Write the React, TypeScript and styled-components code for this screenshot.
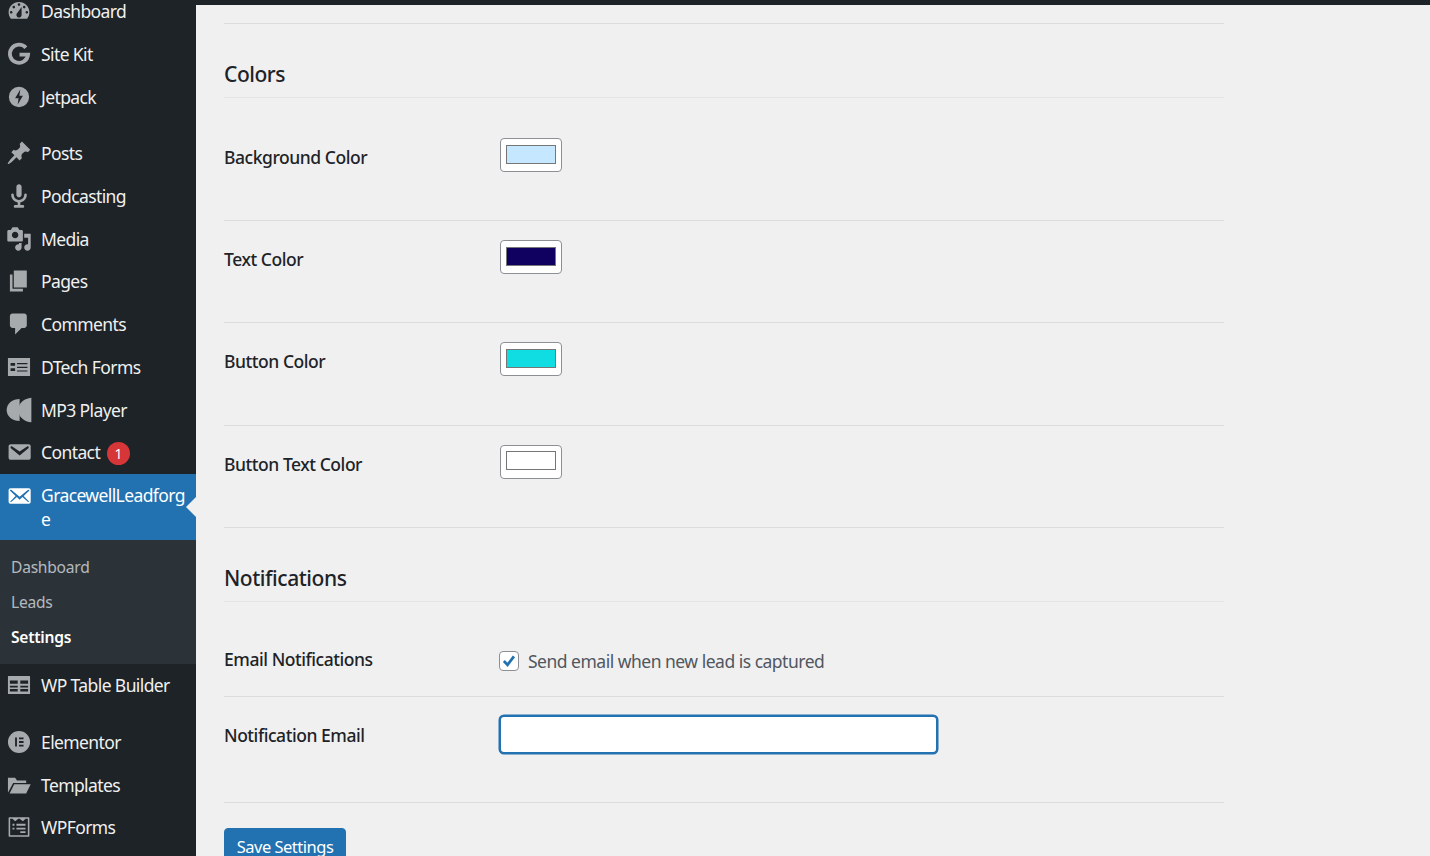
import { ReactNode } from "react";
import styled, { createGlobalStyle } from "styled-components";

const FONT = `"Noto Sans", "Open Sans", "Liberation Sans", sans-serif`;

const Dash = ({ d }: { d: string }) => (
  <svg viewBox="0 0 20 20" width="26" height="26" fill="currentColor" fillRule="evenodd">
    <path d={d} />
  </svg>
);

const icons: Record<string, ReactNode> = {
  dashboard: (
    <Dash d="M3.76 16h12.48c1.1-1.37 1.76-3.11 1.76-5 0-4.42-3.58-8-8-8s-8 3.58-8 8c0 1.89.66 3.63 1.76 5zM10 4c.55 0 1 .45 1 1s-.45 1-1 1-1-.45-1-1 .45-1 1-1zM6 6c.55 0 1 .45 1 1s-.45 1-1 1-1-.45-1-1 .45-1 1-1zm8 0c.55 0 1 .45 1 1s-.45 1-1 1-1-.45-1-1 .45-1 1-1zm-5.37 5.55L12 7v6c0 1.1-.9 2-2 2s-2-.9-2-2c0-.57.24-1.08.63-1.45zM4 10c.55 0 1 .45 1 1s-.45 1-1 1-1-.45-1-1 .45-1 1-1zm12 0c.55 0 1 .45 1 1s-.45 1-1 1-1-.45-1-1 .45-1 1-1z" />
  ),
  google: (
    <svg viewBox="0 0 20 20" width="26" height="26" fill="none" stroke="currentColor" strokeWidth="2.9">
      <path d="M15.3 5.2A7 7 0 1 0 17 10.4H10.4" />
    </svg>
  ),
  jetpack: (
    <svg viewBox="0 0 20 20" width="26" height="26" fill="currentColor" fillRule="evenodd">
      <path d="M10 2.200a7.800 7.800 0 1 1 0 15.600a7.800 7.800 0 0 1 0-15.600zM11 4.300L7 11h2.700l-.7 4.700 4-6.700h-2.700z" />
    </svg>
  ),
  pin: (
    <Dash d="M10.44 3.02l1.82-1.82 6.36 6.35-1.83 1.82c-1.05-.68-2.48-.57-3.41.36l-.75.75c-.92.93-1.04 2.35-.35 3.41l-1.83 1.82-2.41-2.41-2.8 2.79c-.42.42-3.38 2.71-3.8 2.29s1.86-3.39 2.28-3.81l2.79-2.79L4.1 9.36l1.83-1.82c1.05.69 2.48.57 3.4-.36l.75-.75c.93-.92 1.05-2.35.36-3.41z" />
  ),
  mic: (
    <Dash d="M12 9V3c0-1.1-.89-2-2-2-1.12 0-2 .94-2 2v6c0 1.1.9 2 2 2 1.1 0 2-.9 2-2zm4 0c0 2.97-2.16 5.43-5 5.91V17h2c.56 0 1 .45 1 1s-.44 1-1 1H7c-.55 0-1-.45-1-1s.45-1 1-1h2v-2.09C6.17 14.43 4 11.97 4 9c0-.55.45-1 1-1 .56 0 1 .45 1 1 0 2.21 1.8 4 4 4 2.21 0 4-1.79 4-4 0-.55.45-1 1-1 .56 0 1 .45 1 1z" />
  ),
  media: (
    <Dash d="M13 11V4c0-.55-.45-1-1-1h-1.67L9 1H5L3.67 3H2c-.55 0-1 .45-1 1v7c0 .55.45 1 1 1h10c.55 0 1-.45 1-1zM7 4.5c1.38 0 2.5 1.12 2.5 2.5S8.38 9.5 7 9.5 4.5 8.38 4.5 7 5.62 4.5 7 4.5zM14 6h5v10.5c0 1.38-1.12 2.5-2.5 2.5S14 17.88 14 16.5s1.12-2.5 2.5-2.5c.17 0 .34.02.5.05V9h-3V6zm-4 8.05V13h2v3.5c0 1.38-1.12 2.5-2.5 2.5S7 17.88 7 16.5 8.12 14 9.5 14c.17 0 .34.02.5.05z" />
  ),
  pages: <Dash d="M6 15V2h10v13H6zm-1 1h8v2H3V5h2v11z" />,
  comments: (
    <Dash d="M5 2h9c1.1 0 2 .9 2 2v7c0 1.1-.9 2-2 2h-2l-5 5v-5H5c-1.1 0-2-.9-2-2V4c0-1.1.9-2 2-2z" />
  ),
  forms: (
    <Dash d="M1.500 3h17v14h-17zM3.500 7v2h3.500V7zM3.500 11v2h3.500v-2zM8.500 7v.9h8V7zM8.500 9.800v.9h8v-.9zM8.500 12.600v.9h8v-.9z" />
  ),
  player: (
    <svg viewBox="0 0 20 20" width="26" height="26" fill="currentColor">
      <path d="M10.500 1.500v17C5 18.500 0.500 15 0.500 10S5 1.500 10.500 1.500z" />
      <path d="M19.500 0.500v19C14 19 9.500 15.500 9.500 10S14 1 19.500 0.500z" />
    </svg>
  ),
  email: (
    <Dash d="M3.870 4h13.250C18.370 4 19 4.590 19 5.790v8.420c0 1.190-.63 1.790-1.880 1.790H3.870c-1.250 0-1.880-.6-1.880-1.790V5.790c0-1.200.63-1.790 1.880-1.790zm6.620 8.600l6.740-5.530c.24-.2.430-.66.130-1.070-.29-.41-.82-.42-1.170-.17l-5.700 3.860L4.800 5.830c-.35-.25-.88-.24-1.170.17-.3.410-.11.870.13 1.070z" />
  ),
  emailAlt: (
    <Dash d="M19 14.500v-9c0-.83-.67-1.500-1.500-1.500H3.490c-.83 0-1.500.67-1.500 1.500v9c0 .83.67 1.500 1.500 1.500H17.500c.83 0 1.500-.67 1.500-1.500zm-1.310-9.110c.33.33.15.67-.03.84L13.600 9.950l3.900 4.060c.12.14.2.36.06.51-.13.16-.43.15-.56.05l-4.370-3.730-2.140 1.950-2.130-1.950-4.370 3.730c-.13.1-.43.11-.56-.05-.14-.15-.06-.37.06-.51l3.900-4.060-4.060-3.720c-.18-.17-.36-.51-.03-.84s.67-.17.95.07l6.240 5.040 6.250-5.040c.28-.24.62-.4.950-.07z" />
  ),
  table: (
    <Dash d="M2 3h16c.3 0 .5.2.5.5v13c0 .3-.2.5-.5.5H2c-.3 0-.5-.2-.5-.5v-13c0-.3.2-.5.5-.5zm1 3.500V9h6V6.500H3zm8 0V9h6V6.500h-6zM3 10.500V15h6v-4.500H3zm8 0V15h6v-4.500h-6zM3 12h6v1H3zm8 0h6v1h-6z" />
  ),
  elementor: (
    <Dash d="M10 1.500a8.500 8.500 0 1 1 0 17a8.500 8.500 0 0 1 0-17zM7 6.500v7h1.400v-7zM10 6.500v1.400h3.500V6.500zM10 9.300v1.400h3.500V9.300zM10 12.100v1.400h3.500v-1.400z" />
  ),
  folder: (
    <Dash d="M1.500 16V4.500h5.500l1.500 2h7v2H5.500zM2.800 16.500l3.500-7H19l-3.500 7z" />
  ),
  wpforms: (
    <Dash d="M2.500 2.500h15c.3 0 .5.2.5.5v14c0 .3-.2.5-.5.5h-15c-.3 0-.5-.2-.5-.5V3c0-.3.2-.5.5-.5zm.700 1.200v12.600h13.600V3.700h-1.800L13 5.500 10.500 3.700h-1L7 5.500 5 3.700zM5 7.500h1.500V9H5zM8 7.500h7V9H8zM5 10.500h1.500V12H5zM8 10.500h7V12H8zM11 13.300h4v1.300h-4z" />
  ),
};

type NavEntry = { icon: string; label: string; gap?: boolean; badge?: string };

const topNav: NavEntry[] = [
  { icon: "dashboard", label: "Dashboard" },
  { icon: "google", label: "Site Kit" },
  { icon: "jetpack", label: "Jetpack" },
  { icon: "pin", label: "Posts", gap: true },
  { icon: "mic", label: "Podcasting" },
  { icon: "media", label: "Media" },
  { icon: "pages", label: "Pages" },
  { icon: "comments", label: "Comments" },
  { icon: "forms", label: "DTech Forms" },
  { icon: "player", label: "MP3 Player" },
  { icon: "email", label: "Contact", badge: "1" },
];

const bottomNav: NavEntry[] = [
  { icon: "table", label: "WP Table Builder" },
  { icon: "elementor", label: "Elementor", gap: true },
  { icon: "folder", label: "Templates" },
  { icon: "wpforms", label: "WPForms" },
];

const NavRow = ({ icon, label, gap, badge }: NavEntry) => (
  <NavItem $gap={gap}>
    <NavIcon>{icons[icon]}</NavIcon>
    <NavText>{label}</NavText>
    {badge && <Badge>{badge}</Badge>}
  </NavItem>
);

const colorFields = [
  { label: "Background Color", color: "#c5e7ff" },
  { label: "Text Color", color: "#100060" },
  { label: "Button Color", color: "#0fdde2" },
  { label: "Button Text Color", color: "#ffffff" },
];

export default function App() {
  return (
    <>
      <GlobalStyle />
      <Page>
        <AdminBar />
        <Body>
          <Sidebar>
            <Menu>
              {topNav.map((item) => (
                <NavRow key={item.label} {...item} />
              ))}
              <ActiveItem>
                <NavIcon>{icons.emailAlt}</NavIcon>
                <ActiveText>GracewellLeadforge</ActiveText>
                <Notch />
              </ActiveItem>
              <SubMenu>
                <SubItem>Dashboard</SubItem>
                <SubItem>Leads</SubItem>
                <SubItem $current>Settings</SubItem>
              </SubMenu>
              {bottomNav.map((item) => (
                <NavRow key={item.label} {...item} />
              ))}
            </Menu>
          </Sidebar>
          <Main>
            <Content>
              <Rule />
              <SectionTitle>Colors</SectionTitle>
              <Fields>
                {colorFields.map((field) => (
                  <ColorRow key={field.label}>
                    <FieldLabel>{field.label}</FieldLabel>
                    <Swatch type="button">
                      <SwatchFill $color={field.color} />
                    </Swatch>
                  </ColorRow>
                ))}
              </Fields>
              <SectionTitle>Notifications</SectionTitle>
              <Fields>
                <CheckRow>
                  <CheckRowLabel>Email Notifications</CheckRowLabel>
                  <CheckLabel>
                    <CheckBox>
                      <svg viewBox="0 0 20 20" width="20" height="20">
                        <path
                          d="M4.300 10 L8.400 14.300 L15.500 4.800"
                          fill="none"
                          stroke="#2271b1"
                          strokeWidth="3"
                        />
                      </svg>
                    </CheckBox>
                    Send email when new lead is captured
                  </CheckLabel>
                </CheckRow>
                <InputRow>
                  <InputLabel>Notification Email</InputLabel>
                  <EmailInput type="email" />
                </InputRow>
              </Fields>
              <SaveButton type="button">Save Settings</SaveButton>
            </Content>
          </Main>
        </Body>
      </Page>
    </>
  );
}

const GlobalStyle = createGlobalStyle`
  html, body {
    margin: 0;
    padding: 0;
    background: #f0f0f1;
    font-family: ${FONT};
  }
`;

const Page = styled.div`
  height: 856px;
  overflow: hidden;
  display: flex;
  flex-direction: column;
`;

const AdminBar = styled.div`
  height: 5px;
  flex: none;
  background: #1d2327;
`;

const Body = styled.div`
  display: flex;
  flex: 1;
  min-height: 0;
`;

const Sidebar = styled.nav`
  width: 196px;
  flex: none;
  background: #1d2327;
`;

const Menu = styled.div`
  margin-top: -15.2px;
`;

const NavItem = styled.div<{ $gap?: boolean }>`
  height: 42.75px;
  margin-top: ${({ $gap }) => ($gap ? "13.8px" : "0")};
  display: flex;
  align-items: center;
  color: #a7aaad;
`;

const NavIcon = styled.span`
  width: 26px;
  height: 26px;
  margin-left: 6px;
  flex: none;
  display: block;
`;

const NavText = styled.span`
  margin-left: 9px;
  color: #f0f0f1;
  font-size: 17.5px;
  letter-spacing: -0.6px;
  line-height: 24px;
`;

const Badge = styled.span`
  width: 23px;
  height: 23px;
  margin-left: 7px;
  margin-top: 2px;
  border-radius: 50%;
  background: #d63638;
  color: #fff;
  font-size: 14px;
  line-height: 23px;
  text-align: center;
`;

const ActiveItem = styled.div`
  position: relative;
  height: 66px;
  padding-top: 9px;
  box-sizing: border-box;
  display: flex;
  align-items: flex-start;
  background: #2271b1;
  color: #fff;
`;

const ActiveText = styled(NavText)`
  width: 147px;
  color: #fff;
  overflow-wrap: anywhere;
`;

const Notch = styled.span`
  position: absolute;
  right: 0;
  top: 23px;
  border: 10px solid transparent;
  border-left-width: 0;
  border-right-color: #f0f0f1;
`;

const SubMenu = styled.div`
  padding: 10.5px 0 8.5px;
  background: #2c3338;
`;

const SubItem = styled.div<{ $current?: boolean }>`
  height: 35px;
  padding-left: 11px;
  font-size: 15.600px;
  letter-spacing: -0.25px;
  line-height: 35px;
  font-weight: ${({ $current }) => ($current ? 600 : 400)};
  color: ${({ $current }) => ($current ? "#fff" : "rgba(240, 246, 252, 0.7)")};
`;

const Main = styled.main`
  flex: 1;
  padding-left: 28px;
  background: #f0f0f1;
`;

const Content = styled.div`
  width: 1000px;
  padding-top: 18px;
`;

const Rule = styled.div`
  height: 1px;
  background: #dcdcde;
`;

const SectionTitle = styled.h2`
  margin: 0;
  height: 74px;
  padding-top: 35px;
  box-sizing: border-box;
  border-bottom: 1px solid #e4e4e6;
  color: #1d2327;
  font-size: 21px;
  font-weight: 500;
  letter-spacing: -0.45px;
  line-height: 30px;
`;

const Fields = styled.div`
  padding-top: 21px;
`;

const FieldGrid = styled.div`
  display: grid;
  grid-template-columns: 276px 1fr;
  align-items: start;
  border-bottom: 1px solid #dcdcde;
`;

const ColorRow = styled(FieldGrid)`
  padding: 19px 0 48.2px;
`;

const CheckRow = styled(FieldGrid)`
  padding: 24px 0 21px;
`;

const InputRow = styled(FieldGrid)`
  padding: 18px 0 48px;
`;

const FieldLabel = styled.div`
  padding-top: 7px;
  color: #1d2327;
  font-size: 17.5px;
  font-weight: 500;
  letter-spacing: -0.45px;
  line-height: 24px;
`;

const CheckRowLabel = styled(FieldLabel)`
  padding-top: 0;
`;

const InputLabel = styled(FieldLabel)`
  padding-top: 8px;
`;

const Swatch = styled.button`
  width: 62px;
  height: 34px;
  padding: 0 0 2px;
  display: flex;
  align-items: center;
  justify-content: center;
  background: #fff;
  border: 1px solid #8c8f94;
  border-radius: 4px;
`;

const SwatchFill = styled.span<{ $color: string }>`
  width: 50px;
  height: 19px;
  box-sizing: border-box;
  border: 1px solid #767676;
  background: ${({ $color }) => $color};
`;

const CheckLabel = styled.label`
  display: flex;
  align-items: center;
  gap: 9px;
  margin-left: -1px;
  color: #50575e;
  font-size: 17.5px;
  letter-spacing: -0.5px;
  line-height: 28px;
`;

const CheckBox = styled.span`
  width: 20px;
  height: 20px;
  flex: none;
  box-sizing: border-box;
  background: #fff;
  border: 1px solid #8c8f94;
  border-radius: 4px;
  display: flex;
  align-items: center;
  justify-content: center;
`;

const EmailInput = styled.input`
  width: 439px;
  height: 39px;
  margin-left: -1px;
  box-sizing: border-box;
  background: #fff;
  border: 2px solid #2271b1;
  box-shadow: 0 0 0 0.5px #2271b1;
  border-radius: 5px;
  outline: none;
`;

const SaveButton = styled.button`
  display: block;
  width: 122px;
  height: 38px;
  margin-top: 25px;
  padding: 0;
  background: #2271b1;
  border: 1px solid #2271b1;
  border-radius: 4px;
  color: #fff;
  font-family: ${FONT};
  font-size: 16.500px;
  letter-spacing: -0.5px;
`;
